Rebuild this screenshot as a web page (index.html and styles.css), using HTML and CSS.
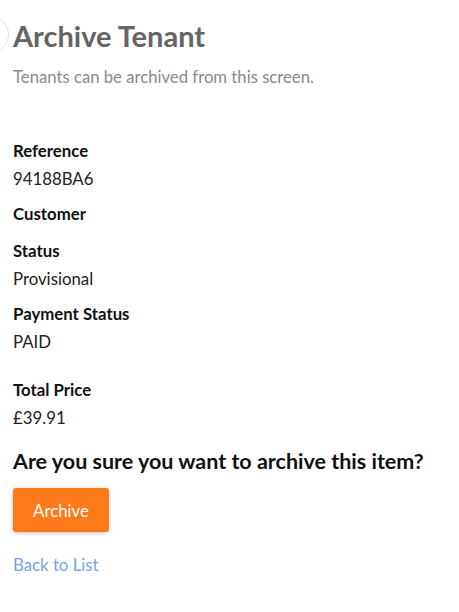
FILE: index.html
```html
<!DOCTYPE html>
<html lang="en">
<head>
<meta charset="utf-8">
<title>Archive Tenant</title>
<link rel="stylesheet" href="styles.css">
</head>
<body>
<div class="toggle-circle"></div>
<main class="page">
  <h1 class="title">Archive Tenant</h1>
  <p class="subtitle">Tenants can be archived from this screen.</p>
  <dl class="details">
    <dt>Reference</dt>
    <dd>94188BA6</dd>
    <dt>Customer</dt>
    <dd class="empty"></dd>
    <dt>Status</dt>
    <dd>Provisional</dd>
    <dt>Payment Status</dt>
    <dd class="spaced">PAID</dd>
    <dt>Total Price</dt>
    <dd>£39.91</dd>
  </dl>
  <h3 class="question">Are you sure you want to archive this item?</h3>
  <form class="actions">
    <button type="button" class="btn-archive">Archive</button>
  </form>
  <a class="back-link" href="#">Back to List</a>
</main>
</body>
</html>
```

FILE: styles.css
```css
html, body {
  margin: 0;
  padding: 0;
  background: #ffffff;
}
body {
  font-family: "Lato", "Noto Sans", sans-serif;
  color: #111;
  position: relative;
  width: 459px;
  height: 612px;
  overflow: hidden;
}
.toggle-circle {
  position: absolute;
  left: -28px;
  top: 16px;
  width: 35px;
  height: 35px;
  border: 1px solid #e2e2e2;
  border-radius: 50%;
}
.page {
  padding: 17px 13px 0 13px;
}
.title {
  margin: 0;
  font-size: 29px;
  line-height: 38px;
  font-weight: 700;
  color: #646464;
}
.subtitle {
  margin: 12px 0 0;
  font-size: 16.7px;
  line-height: 20px;
  color: #8a8a8a;
}
.details {
  margin: 51px 0 0;
}
.details dt {
  font-size: 16.8px;
  line-height: 26px;
  font-weight: 700;
  color: #111;
}
.details dd {
  margin: 2px 0 9px;
  font-size: 16.8px;
  line-height: 26px;
  color: #222;
}
.details dd.empty {
  margin-bottom: 11px;
}
.details dd.spaced {
  margin-bottom: 22px;
}
.question {
  margin: 16px 0 0;
  font-size: 21.5px;
  line-height: 28px;
  font-weight: 700;
  color: #111;
}
.actions {
  margin: 13px 0 0;
}
.btn-archive {
  width: 96px;
  height: 44px;
  border: none;
  border-radius: 3px;
  background: #ff7a1a;
  color: #fff;
  font-family: inherit;
  font-size: 16.8px;
  box-shadow: 0 1px 4px rgba(0,0,0,0.25);
}
.back-link {
  display: inline-block;
  margin-top: 23px;
  font-size: 16.8px;
  line-height: 20px;
  color: #76a4ea;
  text-decoration: none;
}
```
